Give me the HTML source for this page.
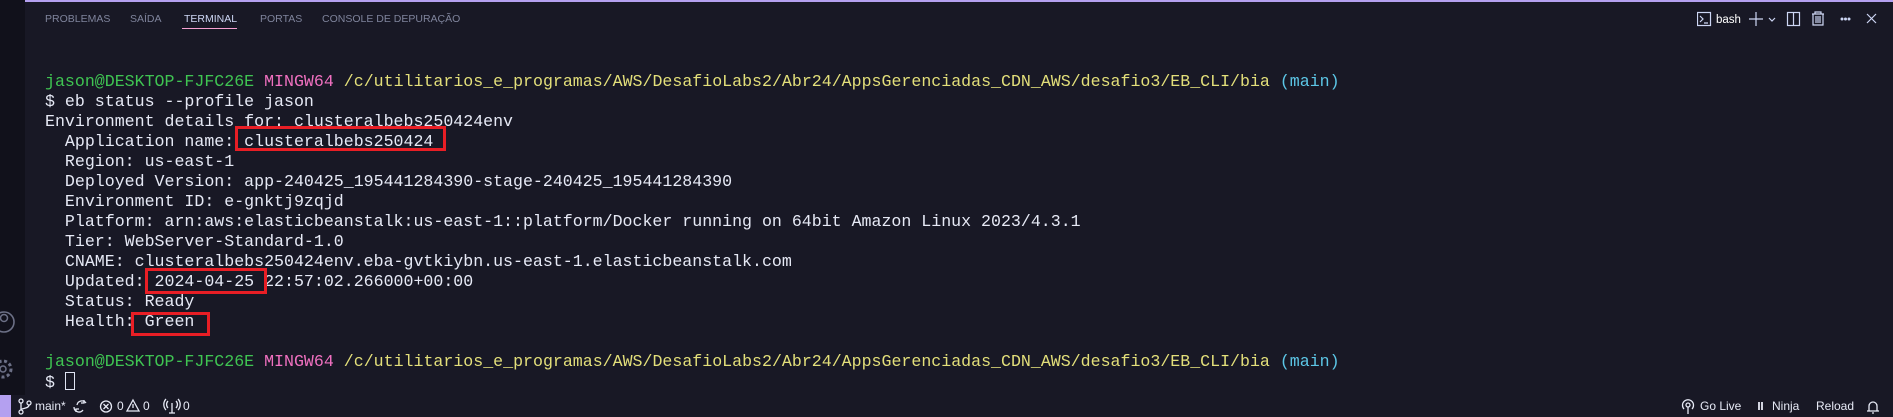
<!DOCTYPE html>
<html><head><meta charset="utf-8"><style>
*{margin:0;padding:0;box-sizing:border-box}
body{width:1893px;height:417px;background:#181825;overflow:hidden;position:relative;font-family:"Liberation Sans",sans-serif}
.act{position:absolute;left:0;top:0;width:25px;height:395px;background:#11111b}
.topline{position:absolute;left:25px;top:0;width:1868px;height:2px;background:#b4a0f0}
.tab{position:absolute;top:13px;font-size:10.5px;color:#7f849c;letter-spacing:0}
.tab.on{color:#cdd6f4}
.ul{position:absolute;left:182px;top:28px;width:55px;height:1px;background:#f5a0d0}
.term{position:absolute;left:45px;top:72px;font-family:"Liberation Mono",monospace;font-size:16.6px;line-height:20px;color:#e6e9f5;white-space:pre}
.g{color:#3fc452}.m{color:#f070c0}.y{color:#e3df7a}.c{color:#5cc6e6}
.box{position:absolute;border:3px solid #e81e25}
.status{position:absolute;left:0;top:395px;width:1893px;height:22px;background:#181825;font-size:12px;color:#e6e9f5}
.status span{position:absolute;top:4px}
.cur{display:inline-block;width:10px;height:18px;border:1px solid #dfe3f3;vertical-align:-3px}
</style></head><body>
<div class="act">
<svg width="25" height="395" style="position:absolute;left:0;top:0"><circle cx="4" cy="322" r="10" fill="none" stroke="#6c7086" stroke-width="1.6"/><circle cx="4" cy="318" r="3.5" fill="none" stroke="#6c7086" stroke-width="1.5"/><circle cx="3" cy="369" r="8" fill="none" stroke="#6c7086" stroke-width="3" stroke-dasharray="3 2.5"/><circle cx="3" cy="369" r="3" fill="none" stroke="#6c7086" stroke-width="1.5"/></svg>
</div>
<div class="topline"></div>
<div class="tab" style="left:45px">PROBLEMAS</div>
<div class="tab" style="left:130px">SAÍDA</div>
<div class="tab on" style="left:184px">TERMINAL</div>
<div class="tab" style="left:260px">PORTAS</div>
<div class="tab" style="left:322px">CONSOLE DE DEPURAÇÃO</div>
<div class="ul"></div>
<svg width="196" height="30" style="position:absolute;left:1697px;top:4px" fill="none" stroke="#cdd6f4" stroke-width="1.2">
<rect x="0.5" y="8.5" width="13" height="13"/><path d="M3 12l3 3-3 3M7 19h4"/>
<text x="19" y="19" fill="#fff" stroke="none" font-size="11.5" font-family="Liberation Sans">bash</text>
<path d="M59 8v14M52 15h14"/><path d="M72 14l3 3 3-3"/>
<rect x="90.5" y="8.5" width="12" height="13"/><path d="M96.5 9v12"/>
<path d="M115 10h12M118 10V8h6v2M116 10v11h10V10M119 12v7M121 12v7M123 12v7"/>
<circle cx="145" cy="15" r="0.9" fill="#cdd6f4"/><circle cx="148.5" cy="15" r="0.9" fill="#cdd6f4"/><circle cx="152" cy="15" r="0.9" fill="#cdd6f4"/>
<path d="M170 10l9 9M179 10l-9 9"/>
</svg>
<div class="term"><span class="g">jason@DESKTOP-FJFC26E</span> <span class="m">MINGW64</span> <span class="y">/c/utilitarios_e_programas/AWS/DesafioLabs2/Abr24/AppsGerenciadas_CDN_AWS/desafio3/EB_CLI/bia</span> <span class="c">(main)</span>
$ eb status --profile jason
Environment details for: clusteralbebs250424env
  Application name: clusteralbebs250424
  Region: us-east-1
  Deployed Version: app-240425_195441284390-stage-240425_195441284390
  Environment ID: e-gnktj9zqjd
  Platform: arn:aws:elasticbeanstalk:us-east-1::platform/Docker running on 64bit Amazon Linux 2023/4.3.1
  Tier: WebServer-Standard-1.0
  CNAME: clusteralbebs250424env.eba-gvtkiybn.us-east-1.elasticbeanstalk.com
  Updated: 2024-04-25 22:57:02.266000+00:00
  Status: Ready
  Health: Green

<span class="g">jason@DESKTOP-FJFC26E</span> <span class="m">MINGW64</span> <span class="y">/c/utilitarios_e_programas/AWS/DesafioLabs2/Abr24/AppsGerenciadas_CDN_AWS/desafio3/EB_CLI/bia</span> <span class="c">(main)</span>
$ <span class="cur"></span></div>
<div class="box" style="left:235px;top:126px;width:211px;height:25px"></div>
<div class="box" style="left:145px;top:268px;width:122px;height:26px"></div>
<div class="box" style="left:131px;top:312px;width:79px;height:24px"></div>
<div class="status">
<div style="position:absolute;left:0;top:0;width:11px;height:22px;background:#b4a0f0"></div>
<svg width="200" height="22" style="position:absolute;left:0;top:0" fill="none" stroke="#e6e9f5" stroke-width="1.3">
<circle cx="21" cy="6" r="2"/><circle cx="21" cy="17" r="2"/><circle cx="29" cy="8" r="2"/><path d="M21 8v7M29 10c0 4-8 3-8 5"/>
<path d="M86 8a5 5 0 0 0-9 2M74 12a5 5 0 0 0 9 3M84 5v3h-3M76 17v-3h3"/>
<circle cx="106" cy="11.5" r="5.5"/><path d="M103.5 9l5 5M108.5 9l-5 5"/>
<path d="M133 5l6 11h-12z"/><path d="M133 9v4"/>
<path d="M172 8v10M169 18h6M168 6a5 5 0 0 0 0 7M176 6a5 5 0 0 1 0 7M166 4a8 8 0 0 0 0 11M178 4a8 8 0 0 1 0 11"/>
</svg>
<span style="left:35px">main*</span>
<span style="left:117px">0</span>
<span style="left:143px">0</span>
<span style="left:183px">0</span>
<svg width="213" height="22" style="position:absolute;left:1680px;top:0" fill="none" stroke="#e6e9f5" stroke-width="1.3">
<circle cx="8" cy="10" r="2"/><path d="M4 14a5.5 5.5 0 1 1 8 0M8 12v7"/>
<path d="M79 7v8M82 7v8" stroke-width="1.8"/>
<path d="M187 16h12M189 16v-5a4 4 0 0 1 8 0v5M192 18h2"/>
</svg>
<span style="left:1700px">Go Live</span>
<span style="left:1772px">Ninja</span>
<span style="left:1816px">Reload</span>
</div>
</body></html>
